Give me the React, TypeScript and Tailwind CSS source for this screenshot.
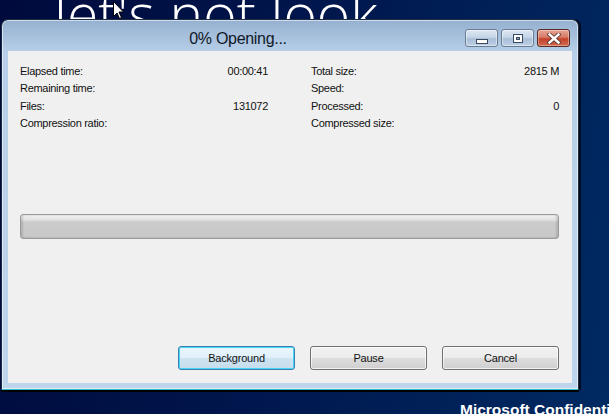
import React from "react";

const leftRows = [
  { label: "Elapsed time:", value: "00:00:41" },
  { label: "Remaining time:", value: "" },
  { label: "Files:", value: "131072" },
  { label: "Compression ratio:", value: "" },
];

const rightRows = [
  { label: "Total size:", value: "2815 M" },
  { label: "Speed:", value: "" },
  { label: "Processed:", value: "0" },
  { label: "Compressed size:", value: "" },
];

function InfoColumn({ rows }: { rows: { label: string; value: string }[] }) {
  return (
    <div className="flex flex-col">
      {rows.map((row) => (
        <div key={row.label} className="flex h-[17.5px] items-center justify-between">
          <span>{row.label}</span>
          <span>{row.value}</span>
        </div>
      ))}
    </div>
  );
}

function CaptionButton({ kind }: { kind: "min" | "max" | "close" }) {
  if (kind === "close") {
    return (
      <div className="flex h-[18px] w-[33px] items-center justify-center rounded-[3px] border border-[#5a2a22] bg-[linear-gradient(to_bottom,#e6a596_0%,#d77a66_45%,#c4412b_55%,#cf6a50_100%)] shadow-[inset_0_0_0_1px_rgba(255,255,255,0.35)]">
        <svg width="14" height="11" viewBox="0 0 14 11">
          <path d="M2.5 1.5 L11.5 9.5 M11.5 1.5 L2.5 9.5" stroke="#5b3a35" strokeWidth="4.2" strokeLinecap="square" />
          <path d="M2.5 1.5 L11.5 9.5 M11.5 1.5 L2.5 9.5" stroke="#ffffff" strokeWidth="2.4" strokeLinecap="square" />
        </svg>
      </div>
    );
  }
  return (
    <div className="flex h-[18px] w-[33px] items-center justify-center rounded-[3px] border border-[#6b7d93] bg-[linear-gradient(to_bottom,#dde7f2_0%,#c5d5e7_45%,#a9bfd8_55%,#bdd0e5_100%)] shadow-[inset_0_0_0_1px_rgba(255,255,255,0.45)]">
      {kind === "min" ? (
        <div className="mt-[6px] h-[5px] w-[12px] border border-[#3a4a5e] bg-white" />
      ) : (
        <div className="flex h-[9px] w-[10px] items-center justify-center border border-[#3a4a5e] bg-white">
          <div className="h-[3px] w-[4px] border border-[#3a4a5e] bg-[#8fa3bb]" />
        </div>
      )}
    </div>
  );
}

function DialogButton({ label, focused }: { label: string; focused?: boolean }) {
  return (
    <button
      className={
        focused
          ? "flex h-[24px] w-[117px] items-center justify-center rounded-[3px] border border-[#3c7fb1] bg-[linear-gradient(to_bottom,#eaf6fd_0%,#e0f0fa_50%,#cfe4f1_51%,#c5ddec_100%)] text-[11px] tracking-[-0.2px] text-[#111] shadow-[inset_0_0_0_1px_#48d6f6]"
          : "flex h-[24px] w-[117px] items-center justify-center rounded-[3px] border border-[#707070] bg-[linear-gradient(to_bottom,#f2f2f2_0%,#ebebeb_50%,#dddddd_51%,#cfcfcf_100%)] text-[11px] tracking-[-0.2px] text-[#111] shadow-[inset_0_0_0_1px_rgba(255,255,255,0.7)]"
      }
    >
      {label}
    </button>
  );
}

export default function App() {
  return (
    <div className="relative h-[414px] w-[609px] overflow-hidden bg-[linear-gradient(100deg,#000a3c_0%,#00164c_45%,#002a62_100%)] font-['Liberation_Sans',Arial,sans-serif]">
      {/* desktop behind */}
      <div className="absolute left-[54px] top-[-15px] whitespace-nowrap font-['Open_Sans',sans-serif] text-[57px] font-light leading-none text-white">
        let's not look
      </div>
      <svg className="absolute left-[113px] top-[1px]" width="12" height="19" viewBox="0 0 12 19">
        <path d="M0.5 0.5 L0.5 15.5 L4 12 L6.5 17.5 L8.5 16.5 L6 11 L10.5 11 Z" fill="#fff" stroke="#000" strokeWidth="1" />
      </svg>
      <div className="absolute left-[460px] top-[402px] whitespace-nowrap text-[15.5px] font-bold leading-none text-white">
        Microsoft Confidential
      </div>

      {/* window */}
      <div className="absolute left-[1px] top-[19px] flex h-[371px] w-[578px] flex-col rounded-t-[7px] border border-[#1d2c40] border-b-[#2fb8cc] bg-[linear-gradient(to_bottom,#95b0d0_0px,#b7cfe8_32px,#bfd5ec_100%)] shadow-[inset_0_0_0_1px_rgba(255,255,255,0.55),0_2px_0_#000000,2px_0_0_#000a20]">
        <div className="flex h-[31px] shrink-0 items-start pt-[9px]">
          <div className="flex-1 pl-[12px] text-center text-[16px] leading-[19px] tracking-[-0.3px] text-[#101828]">
            0% Opening...
          </div>
          <div className="flex gap-[3px] pl-[3px] pr-[8px]">
            <CaptionButton kind="min" />
            <CaptionButton kind="max" />
            <CaptionButton kind="close" />
          </div>
        </div>

        <div className="flex flex-1 px-[6px] pb-[6px]">
          <div className="flex flex-1 flex-col bg-[#f0f0f0] pb-[13px] pl-[12px] pr-[13px] pt-[11px] text-[11px] tracking-[-0.3px] text-[#111]">
            <div className="grid grid-cols-[248px_248px] gap-x-[43px]">
              <InfoColumn rows={leftRows} />
              <InfoColumn rows={rightRows} />
            </div>

            <div className="mt-[82px] h-[25px] rounded-[3px] border border-[#9a9a9a] bg-[linear-gradient(to_bottom,#f3f3f3_0%,#e2e2e2_20%,#cbcbcb_32%,#c8c8c8_100%)] shadow-[inset_2px_0_2px_rgba(0,0,0,0.12),inset_-2px_0_2px_rgba(0,0,0,0.12)]" />

            <div className="mt-auto flex justify-end gap-[15px]">
              <DialogButton label="Background" focused />
              <DialogButton label="Pause" />
              <DialogButton label="Cancel" />
            </div>
          </div>
        </div>
      </div>
    </div>
  );
}
